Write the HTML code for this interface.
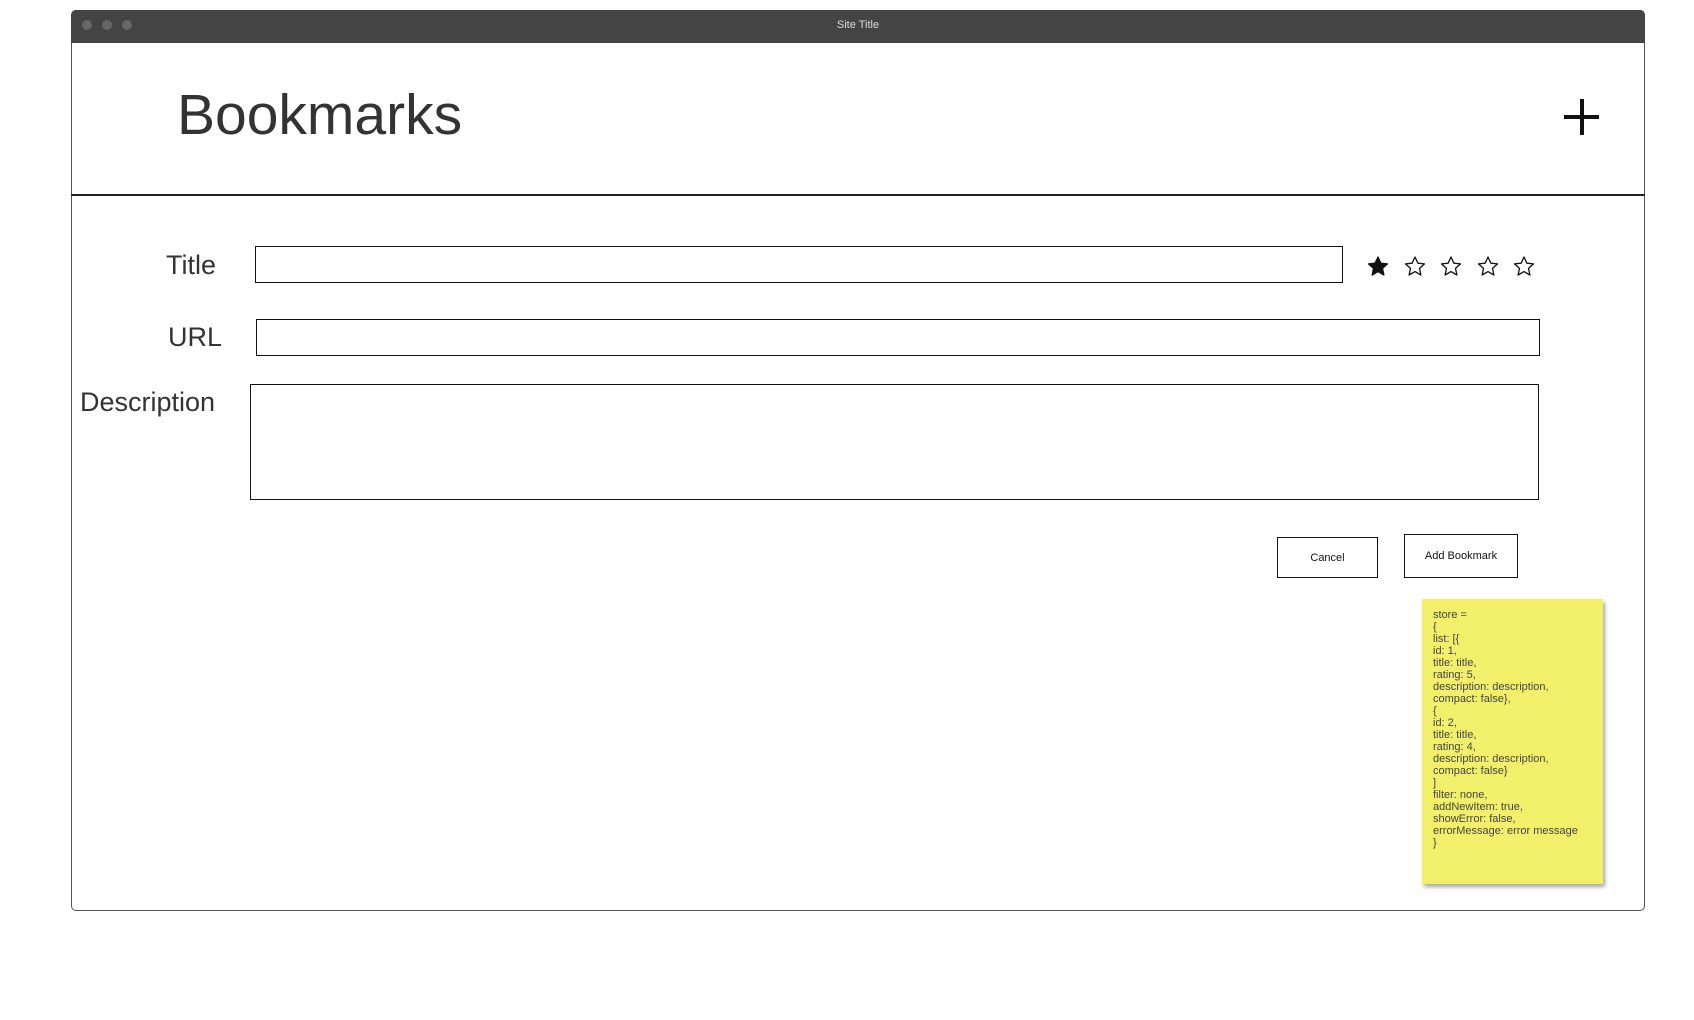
<!DOCTYPE html>
<html><head><meta charset="utf-8"><style>
body{margin:0;width:1694px;height:1020px;background:#fff;position:relative;overflow:hidden;font-family:"Liberation Sans",sans-serif;color:#333}
.a{position:absolute}
.win{left:71px;top:10px;width:1574px;height:901px;border:1px solid #555;border-radius:5px;box-sizing:border-box}
.bar{left:71px;top:10px;width:1574px;height:33px;background:#444;border-radius:5px 5px 0 0}
.dot{width:10px;height:10px;border-radius:50%;background:#666;top:20px}
.box{border:1.5px solid #111;box-sizing:border-box;background:#fff}
.lbl{font-size:27px;color:#333}
.btn{border:1.2px solid #111;box-sizing:border-box;font-size:11px;color:#111;display:flex;align-items:center;justify-content:center}
</style></head><body>
<div class="a win"></div>
<div class="a bar"></div>
<div class="a dot" style="left:82px"></div><div class="a dot" style="left:102px"></div><div class="a dot" style="left:122px"></div>
<div class="a" style="left:71px;width:1574px;top:19px;text-align:center;font-size:11px;color:#ddd">Site Title</div>
<div class="a" style="left:177px;top:82px;font-size:57px;color:#333">Bookmarks</div>
<div class="a" style="left:1564px;top:115px;width:35px;height:4px;background:#111"></div>
<div class="a" style="left:1580px;top:99px;width:4px;height:36px;background:#111"></div>
<div class="a" style="left:71px;top:194px;width:1574px;height:1.5px;background:#222"></div>
<div class="a lbl" style="left:166px;top:250px">Title</div>
<div class="a box" style="left:255px;top:246px;width:1088px;height:37px"></div>
<svg class="a" style="left:1365px;top:254px" width="180" height="24" viewBox="0 0 180 24">
<g stroke="#111" stroke-width="1.3" stroke-linejoin="round">
<path d="M13 3l2.9 6.2 6.6.7-5 4.5 1.4 6.6L13 17.6 7.1 21l1.4-6.6-5-4.5 6.6-.7z" fill="#111"/>
<path transform="translate(37,0)" d="M13 3l2.9 6.2 6.6.7-5 4.5 1.4 6.6L13 17.6 7.1 21l1.4-6.6-5-4.5 6.6-.7z" fill="none"/>
<path transform="translate(73,0)" d="M13 3l2.9 6.2 6.6.7-5 4.5 1.4 6.6L13 17.6 7.1 21l1.4-6.6-5-4.5 6.6-.7z" fill="none"/>
<path transform="translate(110,0)" d="M13 3l2.9 6.2 6.6.7-5 4.5 1.4 6.6L13 17.6 7.1 21l1.4-6.6-5-4.5 6.6-.7z" fill="none"/>
<path transform="translate(146,0)" d="M13 3l2.9 6.2 6.6.7-5 4.5 1.4 6.6L13 17.6 7.1 21l1.4-6.6-5-4.5 6.6-.7z" fill="none"/>
</g></svg>
<div class="a lbl" style="left:168px;top:322px">URL</div>
<div class="a box" style="left:256px;top:319px;width:1284px;height:37px"></div>
<div class="a lbl" style="left:80px;top:387px">Description</div>
<div class="a box" style="left:250px;top:384px;width:1289px;height:116px"></div>
<div class="a btn" style="left:1277px;top:537px;width:101px;height:41px">Cancel</div>
<div class="a btn" style="left:1404px;top:534px;width:114px;height:44px">Add Bookmark</div>
<div class="a" style="left:1422px;top:599px;width:181px;height:285px;background:#f2f06a;box-shadow:2px 3px 4px rgba(0,0,0,.35)"></div>
<div class="a" style="left:1433px;top:609px;font-size:11px;line-height:12px;color:#444">store =<br>{<br>list: [{<br>id: 1,<br>title: title,<br>rating: 5,<br>description: description,<br>compact: false},<br>{<br>id: 2,<br>title: title,<br>rating: 4,<br>description: description,<br>compact: false}<br>]<br>filter: none,<br>addNewItem: true,<br>showError: false,<br>errorMessage: error message<br>}</div>
</body></html>
